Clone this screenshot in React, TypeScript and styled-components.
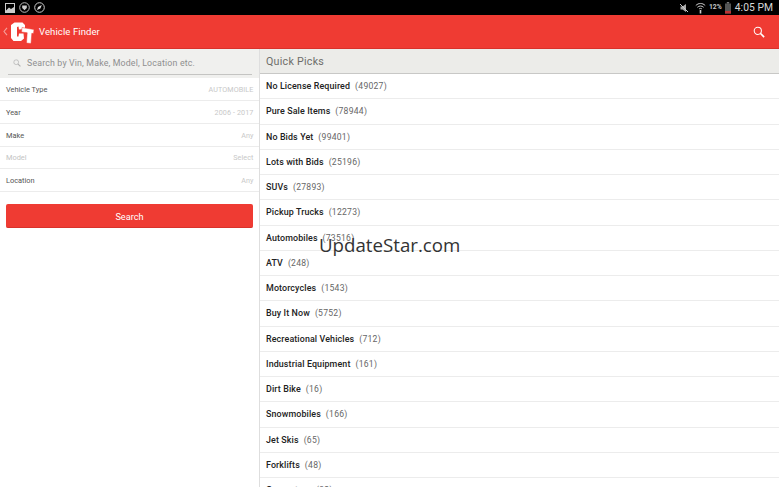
import React from "react";
import styled, { createGlobalStyle } from "styled-components";

const Global = createGlobalStyle`
  html, body { margin: 0; padding: 0; background: #fff; overflow: hidden; }
  body { font-family: Roboto, "Liberation Sans", sans-serif; }
`;
const Page = styled.div`
  position: relative; width: 779px; height: 487px; overflow: hidden;
  display: flex; flex-direction: column; background: #fff;
`;
const StatusBar = styled.div`
  height: 15px; background: #000; display: flex; align-items: center;
  justify-content: space-between; padding: 0 6px 0 5px; flex: none;
`;
const StatusGroup = styled.div<{ $gap: number }>`
  display: flex; align-items: center; gap: ${(p) => p.$gap}px;
`;
const Clock = styled.span`
  color: #d8d8d8; font-size: 10.3px; letter-spacing: 0.05px; line-height: 15px; margin-left: 1px;
`;
const Battery = styled.span`
  color: #c8c8c8; font-size: 6.8px; font-weight: 700; line-height: 15px;
`;
const Header = styled.header`
  height: 33px; background: #ef3b33; border-bottom: 1px solid #d8322b;
  display: flex; align-items: center; padding: 0 14px 0 3px; flex: none;
`;
const Title = styled.h1`
  margin: 0 0 0 5px; color: #fff; font-size: 9.5px; font-weight: 400; letter-spacing: 0.1px; flex: 1;
`;
const Body = styled.div`
  flex: 1; display: flex; min-height: 0;
`;
const Left = styled.aside`
  width: 259px; flex: none; display: flex; flex-direction: column; background: #fff;
`;
const SearchBar = styled.div`
  height: 29px; flex: none; background: #f0f0ee; padding: 0 7px 0 8px; box-sizing: border-box;
  display: flex;
`;
const SearchField = styled.div`
  height: 22px; flex: 1; display: flex; align-items: center; gap: 6px; padding: 0 0 0 5px;
  border-bottom: 1px solid #c4c4c2; margin-top: 2.5px;
`;
const Placeholder = styled.span`
  font-size: 8.8px; color: #8f8f8f; letter-spacing: 0.16px; white-space: nowrap;
`;
const FilterRow = styled.div`
  height: 22.85px; box-sizing: border-box; flex: none; display: flex; align-items: center;
  justify-content: space-between; padding: 1px 5.5px 0 6px; border-bottom: 1px solid #ececec;
`;
const FilterLabel = styled.span<{ $off?: boolean }>`
  font-size: 7.4px; color: ${(p) => (p.$off ? "#c4c4c4" : "#555")};
`;
const FilterValue = styled.span`
  font-size: 7.2px; color: #c8c8c8; letter-spacing: 0.1px;
`;
const SearchButton = styled.button`
  display: block; height: 24px; margin: 12px 6px 0; border: none; border-radius: 2px;
  background: #ef3b33; border-bottom: 1px solid #d8322b; color: #fff;
  font: 400 9.2px Roboto, sans-serif; padding: 1px 0 0;
`;
const Right = styled.main`
  flex: 1; min-width: 0; border-left: 1px solid #dedede; display: flex; flex-direction: column;
`;
const PicksTitle = styled.div`
  height: 25px; flex: none; box-sizing: border-box; background: #ecece9; border-bottom: 1px solid #c8c8c6;
  display: flex; align-items: center; padding-left: 6px; color: #6e6e6a; font-size: 10.7px; letter-spacing: 0.25px;
`;
const Pick = styled.div`
  height: 25.25px; flex: none; box-sizing: border-box; display: flex; align-items: center; gap: 5px;
  padding-left: 6px; border-bottom: 1px solid #ececec; white-space: nowrap;
`;
const PickName = styled.span`
  font-size: 8.9px; font-weight: 500; color: #222; letter-spacing: 0.12px;
`;
const PickCount = styled.span`
  font-size: 8.6px; color: #666; letter-spacing: 0.25px;
`;
const Watermark = styled.div`
  position: absolute; left: 319px; top: 231px; font-family: "Open Sans", sans-serif;
  font-size: 18.7px; line-height: 28px; color: #333; white-space: nowrap;
`;

const filters = [
  { label: "Vehicle Type", value: "AUTOMOBILE" },
  { label: "Year", value: "2006 - 2017" },
  { label: "Make", value: "Any" },
  { label: "Model", value: "Select", off: true },
  { label: "Location", value: "Any" },
];
const picks: [string, string][] = [
  ["No License Required", "(49027)"],
  ["Pure Sale Items", "(78944)"],
  ["No Bids Yet", "(99401)"],
  ["Lots with Bids", "(25196)"],
  ["SUVs", "(27893)"],
  ["Pickup Trucks", "(12273)"],
  ["Automobiles", "(73516)"],
  ["ATV", "(248)"],
  ["Motorcycles", "(1543)"],
  ["Buy It Now", "(5752)"],
  ["Recreational Vehicles", "(712)"],
  ["Industrial Equipment", "(161)"],
  ["Dirt Bike", "(16)"],
  ["Snowmobiles", "(166)"],
  ["Jet Skis", "(65)"],
  ["Forklifts", "(48)"],
  ["Generators", "(32)"],
];

const Logo = () => (
  <svg width="24" height="24" viewBox="0 0 24 24" style={{ flex: "none", marginLeft: 2 }}>
    <path d="M4.5 2.5 L1 5 L1 18 L3.5 21 L11 21 L14 18.5 L13.5 13.5 L9 13.5 L8.5 16.5 L7 16.5 L7 7 L8.5 6.5 L9 9.5 L15 9 L15 5 L12.5 2.5 Z" fill="#fff" />
    <path d="M12 7.5 L24 9.5 L23.5 13.5 L21.8 13.3 L21 23.5 L16.5 23 L17.2 12.7 L11.5 12 Z" fill="#fff" stroke="#ef3b33" strokeWidth="0.5" />
  </svg>
);
const SearchIcon = ({ size, color }: { size: number; color: string }) => (
  <svg width={size} height={size} viewBox="0 0 14 14" fill="none" stroke={color} style={{ flex: "none" }}>
    <circle cx="5.6" cy="5.6" r="4.2" strokeWidth="1.2" />
    <path d="M8.8 8.8 L13 13" strokeWidth="1.9" />
  </svg>
);

export default function App() {
  return (
    <Page>
      <Global />
      <StatusBar>
        <StatusGroup $gap={4}>
          <svg width="10" height="10" viewBox="0 0 10 10" fill="none">
            <rect x="0.5" y="0.5" width="9" height="9" stroke="#ccc" />
            <path d="M1 7.5 L4 4.5 L6 6 L9 4 V9 H1 Z" fill="#ccc" />
          </svg>
          <svg width="11" height="11" viewBox="0 0 11 11" fill="none">
            <circle cx="5.5" cy="5.5" r="4.8" stroke="#bbb" />
            <path d="M3.2 3.4 H7.8 V6 L5.5 8.2 L3.2 6 Z" fill="#ccc" />
          </svg>
          <svg width="11" height="11" viewBox="0 0 11 11" fill="none">
            <circle cx="5.5" cy="5.5" r="4.8" stroke="#ccc" />
            <path d="M3 8 L4 5 L7.8 3 L6.4 6.6 Z" fill="#ddd" />
          </svg>
        </StatusGroup>
        <StatusGroup $gap={3}>
          <svg width="10" height="10" viewBox="0 0 10 10" fill="none" style={{ marginRight: 3 }}>
            <path d="M1.5 3.5 H3.5 L7 1 V9 L3.5 6.5 H1.5 Z" fill="#aaa" />
            <path d="M1 1 L9 9" stroke="#ccc" />
          </svg>
          <svg width="11" height="12" viewBox="0 0 11 12" fill="none" stroke="#ccc">
            <path d="M0.8 3.5 C3.5 0.8 7.5 0.8 10.2 3.5" />
            <path d="M2.4 5.3 C4.2 3.6 6.8 3.6 8.6 5.3" />
            <path d="M4 7 C5 6.2 6 6.2 7 7" />
            <path d="M5.5 8 V11.5" strokeWidth="1.6" />
          </svg>
          <Battery>12%</Battery>
          <svg width="6" height="12" viewBox="0 0 6 12">
            <rect x="0" y="1.5" width="6" height="10" fill="#555" />
            <rect x="1.8" y="0" width="2.4" height="1.5" fill="#777" />
            <rect x="0" y="9" width="6" height="2.5" fill="#b33" />
          </svg>
          <Clock>4:05 PM</Clock>
        </StatusGroup>
      </StatusBar>
      <Header>
        <svg width="5" height="9" viewBox="0 0 5 9" fill="none" stroke="#f5a19c" strokeWidth="1.1" style={{ flex: "none" }}>
          <path d="M4 0.8 L1 4.5 L4 8.2" />
        </svg>
        <Logo />
        <Title>Vehicle Finder</Title>
        <SearchIcon size={12} color="#fff" />
      </Header>
      <Body>
        <Left>
          <SearchBar>
            <SearchField>
              <SearchIcon size={8} color="#b0b0b0" />
              <Placeholder>Search by Vin, Make, Model, Location etc.</Placeholder>
            </SearchField>
          </SearchBar>
          {filters.map((f) => (
            <FilterRow key={f.label}>
              <FilterLabel $off={f.off}>{f.label}</FilterLabel>
              <FilterValue>{f.value}</FilterValue>
            </FilterRow>
          ))}
          <SearchButton>Search</SearchButton>
        </Left>
        <Right>
          <PicksTitle>Quick Picks</PicksTitle>
          {picks.map(([n, c]) => (
            <Pick key={n}>
              <PickName>{n}</PickName>
              <PickCount>{c}</PickCount>
            </Pick>
          ))}
        </Right>
      </Body>
      <Watermark>UpdateStar.com</Watermark>
    </Page>
  );
}
